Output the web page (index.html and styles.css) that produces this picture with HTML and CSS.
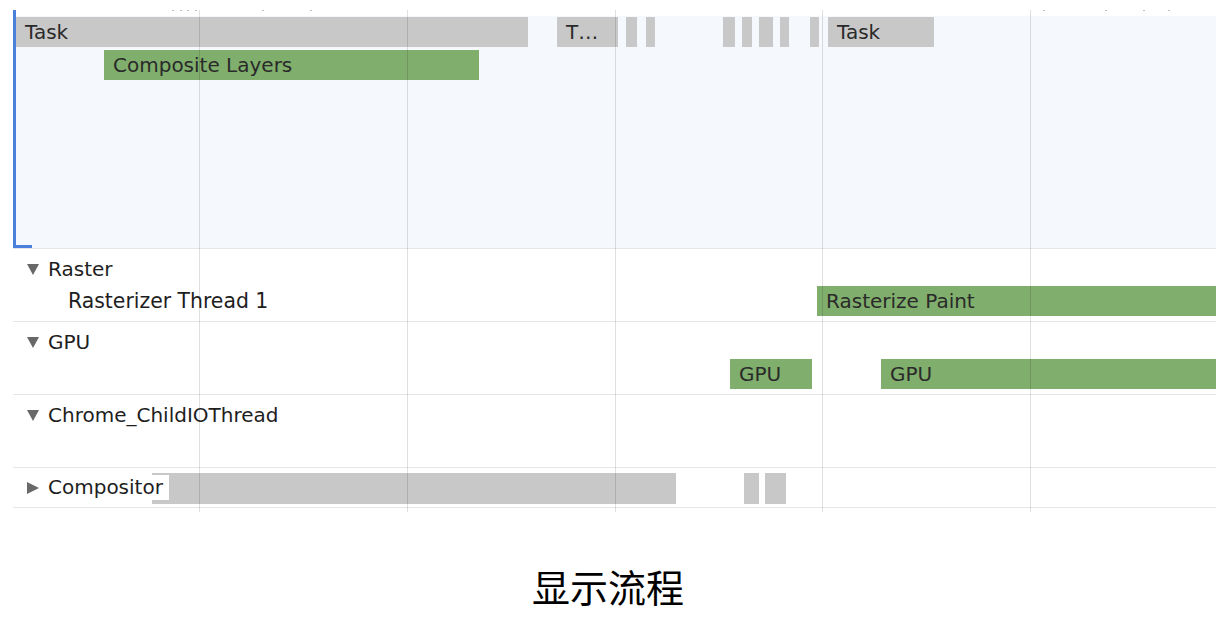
FILE: index.html
```html
<!DOCTYPE html>
<html>
<head>
<meta charset="utf-8">
<link rel="stylesheet" href="styles.css">
</head>
<body>
<div class="page">
  <div class="timeline">
    <div class="main">
      <div class="ruler">
        <span class="tick" style="left:156px"></span>
        <span class="tick" style="left:164px"></span>
        <span class="tick" style="left:171px"></span>
        <span class="tick" style="left:179px"></span>
        <span class="tick" style="left:246px"></span>
        <span class="tick" style="left:294px"></span>
        <span class="tick" style="left:1027px"></span>
        <span class="tick" style="left:1089px"></span>
        <span class="tick" style="left:1127px"></span>
        <span class="tick" style="left:1152px"></span>
      </div>
      <div class="flame">
        <div class="bar gray lvl0" style="left:0;width:512px">Task</div>
        <div class="bar gray lvl0" style="left:541px;width:61px">T…</div>
        <div class="bar gray lvl0" style="left:610px;width:11px"></div>
        <div class="bar gray lvl0" style="left:630px;width:6px"></div>
        <div class="bar gray lvl0" style="left:707px;width:12px"></div>
        <div class="bar gray lvl0" style="left:726px;width:10px"></div>
        <div class="bar gray lvl0" style="left:743px;width:14px"></div>
        <div class="bar gray lvl0" style="left:764px;width:9px"></div>
        <div class="bar gray lvl0" style="left:794px;width:9px"></div>
        <div class="bar gray lvl0" style="left:812px;width:106px">Task</div>
        <div class="bar green lvl1" style="left:88px;width:375px">Composite Layers</div>
        <span class="stub"></span>
      </div>
    </div>

    <div class="row">
      <div class="head">
        <svg class="tri" width="12" height="11" viewBox="0 0 12 11"><polygon points="0,0 12,0 6,11" fill="#686868"/></svg>
        <span class="name">Raster</span>
      </div>
      <div class="sub">
        <span class="subname">Rasterizer Thread 1</span>
        <div class="bar green" style="left:804px;width:399px">Rasterize Paint</div>
      </div>
    </div>

    <div class="row">
      <div class="head">
        <svg class="tri" width="12" height="11" viewBox="0 0 12 11"><polygon points="0,0 12,0 6,11" fill="#686868"/></svg>
        <span class="name">GPU</span>
      </div>
      <div class="sub">
        <div class="bar green" style="left:717px;width:82px">GPU</div>
        <div class="bar green" style="left:868px;width:335px">GPU</div>
      </div>
    </div>

    <div class="row">
      <div class="head">
        <svg class="tri" width="12" height="11" viewBox="0 0 12 11"><polygon points="0,0 12,0 6,11" fill="#686868"/></svg>
        <span class="name">Chrome_ChildIOThread</span>
      </div>
      <div class="sub"></div>
    </div>

    <div class="row collapsed">
      <div class="bar gray comp" style="left:139px;width:524px"></div>
      <div class="bar gray comp" style="left:731px;width:15px"></div>
      <div class="bar gray comp" style="left:752px;width:21px"></div>
      <div class="head chead">
        <svg class="tri" width="12" height="12" viewBox="0 0 12 12"><polygon points="0,0 12,6 0,12" fill="#686868"/></svg>
        <span class="name cname">Compositor</span>
      </div>
    </div>

    <div class="grid">
      <span class="gl" style="left:186px"></span>
      <span class="gl" style="left:394px"></span>
      <span class="gl" style="left:602px"></span>
      <span class="gl" style="left:809px"></span>
      <span class="gl" style="left:1017px"></span>
    </div>
  </div>

  <div class="caption">显示流程</div>
</div>
</body>
</html>
```

FILE: styles.css
```css
html, body {
  margin: 0;
  padding: 0;
  background: #ffffff;
}

.page {
  width: 1216px;
  padding-top: 10px;
  font-family: "DejaVu Sans", "Liberation Sans", sans-serif;
}

.timeline {
  position: relative;
  margin-left: 13px;
  width: 1203px;
}

.main {
  border-left: 3px solid #4a7fdc;
}

.ruler {
  position: relative;
  height: 6px;
  background: #ffffff;
}

.tick {
  position: absolute;
  top: 0;
  width: 2px;
  height: 1px;
  background: #bdbdbd;
}

.flame {
  position: relative;
  height: 232px;
  background: #f5f8fd;
}

.stub {
  position: absolute;
  left: -3px;
  bottom: 0;
  width: 19px;
  height: 3px;
  background: #4a7fdc;
}

.bar {
  position: absolute;
  box-sizing: border-box;
  height: 30px;
  line-height: 30px;
  padding-left: 9px;
  font-size: 20px;
  color: #2a2a2a;
  white-space: nowrap;
  overflow: hidden;
}

.gray {
  background: #c8c8c8;
}

.green {
  background: #80ae6c;
}

.lvl0 {
  top: 1px;
}

.lvl1 {
  top: 34px;
}

.row {
  position: relative;
  height: 72px;
  border-top: 1px solid #e6e6e6;
}

.row.collapsed {
  height: 39px;
  border-bottom: 1px solid #e6e6e6;
}

.head {
  box-sizing: border-box;
  height: 36px;
  padding-top: 4px;
  display: flex;
  align-items: center;
  gap: 9px;
  padding-left: 14px;
  font-size: 20px;
  color: #1e1e1e;
}

.head .name {
  line-height: 32px;
}

.chead {
  position: relative;
  height: 39px;
  padding-top: 0;
}

.head .cname {
  line-height: 25px;
  padding-right: 6px;
  background: #ffffff;
}

.sub {
  position: relative;
  height: 32px;
}

.sub .bar {
  top: 1px;
}

.subname {
  display: block;
  padding-left: 55px;
  line-height: 32px;
  font-size: 20.4px;
  color: #1e1e1e;
}

.comp {
  top: 5px;
  height: 31px;
}

.grid {
  position: absolute;
  left: 0;
  top: 0;
  width: 100%;
  height: 502px;
  pointer-events: none;
}

.gl {
  position: absolute;
  top: 0;
  width: 1px;
  height: 100%;
  background: rgba(0, 0, 0, 0.12);
}

.caption {
  margin-top: 55px;
  text-align: center;
  font-family: "Noto Sans CJK SC", sans-serif;
  font-size: 38px;
  line-height: 46px;
  color: #000000;
}
```
